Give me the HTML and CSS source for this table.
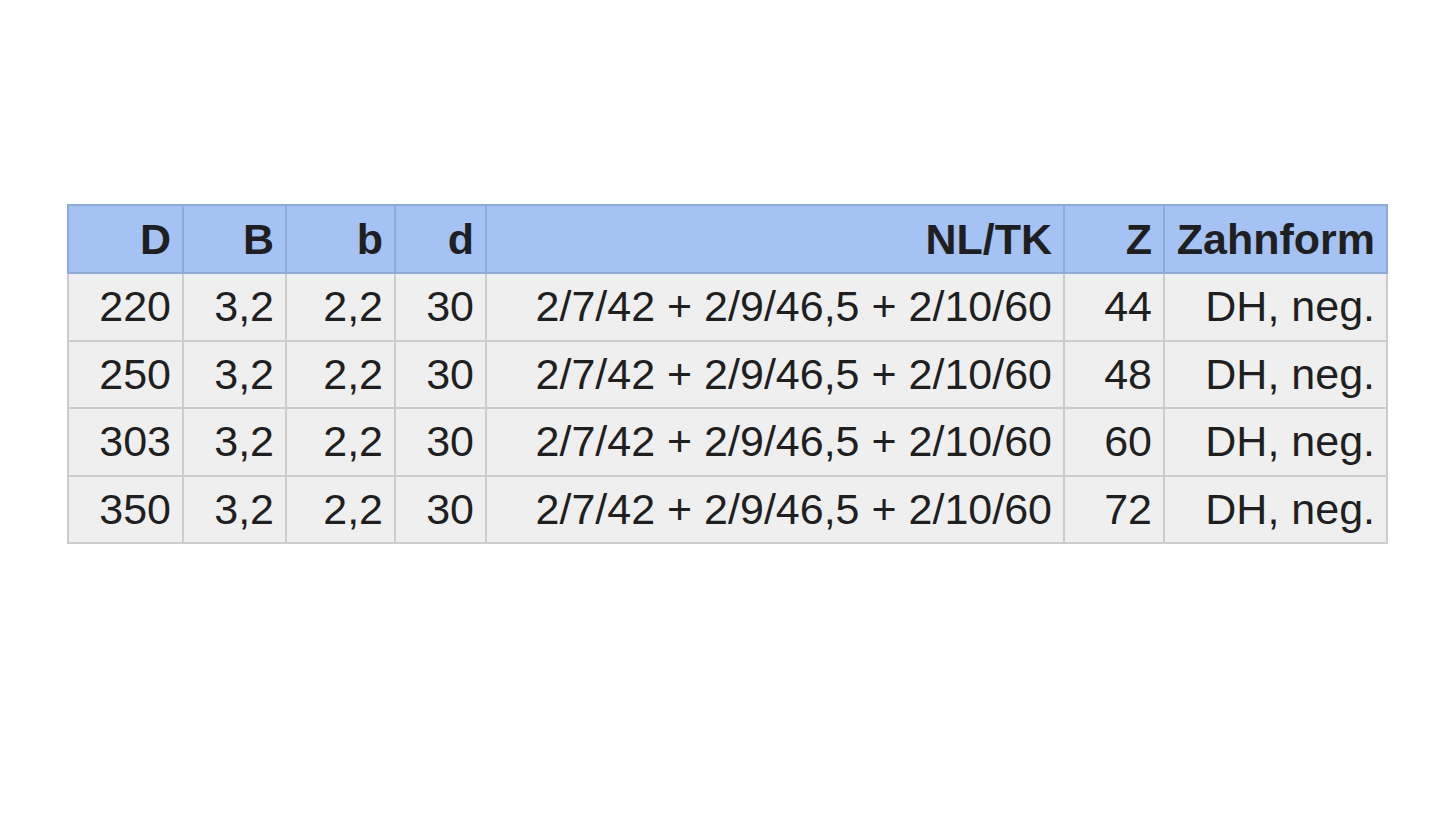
FILE: index.html
```html
<!DOCTYPE html>
<html lang="de">
<head>
<meta charset="utf-8">
<title>Tabelle</title>
<link rel="stylesheet" href="styles.css">
</head>
<body>
<div class="page">
  <table class="spec">
    <colgroup>
      <col class="c1"><col class="c2"><col class="c3"><col class="c4"><col class="c5"><col class="c6"><col class="c7">
    </colgroup>
    <thead>
      <tr><th>D</th><th>B</th><th>b</th><th>d</th><th>NL/TK</th><th>Z</th><th>Zahnform</th></tr>
    </thead>
    <tbody>
      <tr><td>220</td><td>3,2</td><td>2,2</td><td>30</td><td>2/7/42 + 2/9/46,5 + 2/10/60</td><td>44</td><td>DH, neg.</td></tr>
      <tr><td>250</td><td>3,2</td><td>2,2</td><td>30</td><td>2/7/42 + 2/9/46,5 + 2/10/60</td><td>48</td><td>DH, neg.</td></tr>
      <tr><td>303</td><td>3,2</td><td>2,2</td><td>30</td><td>2/7/42 + 2/9/46,5 + 2/10/60</td><td>60</td><td>DH, neg.</td></tr>
      <tr><td>350</td><td>3,2</td><td>2,2</td><td>30</td><td>2/7/42 + 2/9/46,5 + 2/10/60</td><td>72</td><td>DH, neg.</td></tr>
    </tbody>
  </table>
</div>
</body>
</html>
```

FILE: styles.css
```css
html, body {
  margin: 0;
  padding: 0;
  background: #ffffff;
}
.page {
  padding: 204px 0 0 67px;
}
.spec {
  border-collapse: collapse;
  table-layout: fixed;
  width: 1321px;
  font-family: "Liberation Sans", Arial, sans-serif;
  font-size: 43px;
  color: #1f1f1f;
}
.c1 { width: 115px; }
.c2 { width: 103px; }
.c3 { width: 109px; }
.c4 { width: 91px; }
.c5 { width: 578px; }
.c6 { width: 100px; }
.c7 { width: 223px; }
.spec th, .spec td {
  height: 66px;
  padding: 0 11px 0 0;
  text-align: right;
  vertical-align: middle;
  white-space: nowrap;
  line-height: 1;
}
.spec td {
  height: 65.5px;
}
.spec th {
  background: #a4c2f4;
  border: 2px solid #8eaad9;
  font-weight: bold;
}
.spec td {
  background: #efefef;
  border: 2px solid #cccccc;
}
```
